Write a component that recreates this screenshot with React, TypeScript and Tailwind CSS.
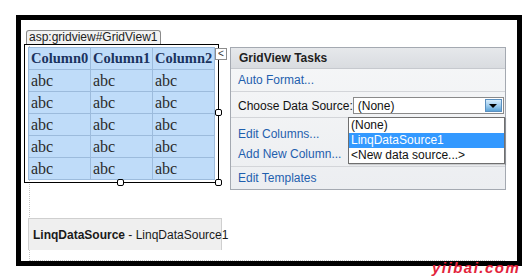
const ui = { fontFamily: '"Liberation Sans", Arial, sans-serif' };
const serif = { fontFamily: '"Liberation Serif", "Times New Roman", serif' };

const rows = [0, 1, 2, 3, 4];
const cols = ["Column0", "Column1", "Column2"];

const Handle = ({ className }: { className: string }) => (
  <div
    className={`absolute w-[7px] h-[7px] rounded-[2px] border border-black bg-white ${className}`}
  />
);

const GridView = () => (
  <div className="flex flex-col">
    <div
      className="ml-[2px] self-start h-[14px] px-[2px] border border-b-0 border-[#8a8a8a] rounded-t-[3px] bg-[#f2f2f2] text-[12px] leading-[13px] text-[#222] whitespace-nowrap"
      style={ui}
    >
      asp:gridview#GridView1
    </div>
    <div className="relative w-[195px] h-[139px] border border-black pl-[3px] pt-[2px]">
      <div
        className="grid grid-cols-[62px_62px_62px] border-l border-t border-[#9cbbdc] bg-[#bfdcf9] w-[187px]"
        style={serif}
      >
        {cols.map((c) => (
          <div
            key={c}
            className="h-[22px] pl-[2px] border-r border-b border-[#9cbbdc] text-[14.5px] leading-[21px] font-bold text-[#1b3360] whitespace-nowrap overflow-hidden"
          >
            {c}
          </div>
        ))}
        {rows.map((r) =>
          cols.map((c) => (
            <div
              key={`${r}-${c}`}
              className="h-[22px] pl-[2px] border-r border-b border-[#9cbbdc] text-[16px] leading-[21px] text-[#2a2a2a]"
            >
              abc
            </div>
          ))
        )}
      </div>
      <Handle className="right-[-4px] top-[64px]" />
      <Handle className="left-[92px] bottom-[-4px]" />
      <Handle className="right-[-4px] bottom-[-4px]" />
      <div
        className="absolute right-[-9px] top-[3px] w-[12px] h-[12px] border border-[#8c8c8c] bg-white flex items-center justify-center text-[10px] leading-none text-[#333]"
        style={ui}
      >
        &lt;
      </div>
    </div>
  </div>
);

const Link = ({ children }: { children: string }) => (
  <div className="text-[#1f5fae] whitespace-nowrap">{children}</div>
);

const TasksPanel = () => (
  <div
    className="relative ml-[11px] mt-[17px] w-[279px] h-[143px] border border-[#a4a9b1] bg-gradient-to-b from-[#f6f7f8] to-[#eceef1] text-[12px]"
    style={ui}
  >
    <div className="h-[21px] pl-[8px] flex items-center border-b border-[#c6c9ce] bg-gradient-to-b from-[#e6e8eb] to-[#d9dce0] font-bold text-[#1e1e1e]">
      GridView Tasks
    </div>
    <div className="h-[23px] pl-[7px] flex items-center border-b border-[#d3d5d9]">
      <Link>Auto Format...</Link>
    </div>
    <div className="h-[26px] pl-[7px] pt-[5px] flex items-start border-b border-[#d3d5d9]">
      <div className="leading-[18px] text-[#111] whitespace-nowrap">Choose Data Source:</div>
      <div className="ml-auto mr-[1px] w-[151px] h-[17px] border border-[#8a8a8a] bg-white flex items-center pl-[4px]">
        <span className="text-[#111] leading-none">(None)</span>
        <div className="ml-auto mr-[1px] w-[17px] h-[13px] border border-[#5a8fbf] bg-gradient-to-b from-[#d7ecfb] via-[#9fcdee] to-[#5aa2d6] flex items-center justify-center">
          <div className="w-0 h-0 border-l-[4px] border-r-[4px] border-t-[4px] border-l-transparent border-r-transparent border-t-black" />
        </div>
      </div>
    </div>
    <div className="h-[49px] pl-[7px] pt-[6px] leading-[20px] border-b border-[#d3d5d9]">
      <Link>Edit Columns...</Link>
      <Link>Add New Column...</Link>
    </div>
    <div className="h-[22px] pl-[7px] leading-[22px]">
      <Link>Edit Templates</Link>
    </div>

    <div className="absolute left-[117px] top-[69px] w-[157px] h-[47px] border border-[#6f6f6f] bg-white leading-[15px] text-[#111] shadow-[1px_1px_1px_rgba(0,0,0,0.15)]">
      <div className="pl-[2px] h-[15px]">(None)</div>
      <div className="pl-[2px] h-[15px] bg-[#3399ff] text-white">LinqDataSource1</div>
      <div className="pl-[2px] h-[15px]">&lt;New data source...&gt;</div>
    </div>
  </div>
);

export default function App() {
  return (
    <div className="relative w-[531px] h-[278px] bg-white overflow-hidden">
      <div className="ml-[16px] mt-[15px] w-[506px] h-[251px] border-[5px] border-black bg-white">
        <div className="ml-[8px] mt-[2px] w-[476px] h-[231px] border-l border-b border-dotted border-[#c4c4c4]">
          <div className="flex items-start mt-[10px] -ml-[6px]">
            <GridView />
            <TasksPanel />
          </div>
          <div
            className="-ml-[2px] mt-[28px] w-[194px] h-[32px] border border-b-0 border-[#cfcfcf] bg-[#efefef] flex items-center pl-[4px] text-[12px] text-[#1a1a1a]"
            style={ui}
          >
            <span className="font-bold">LinqDataSource</span>
            <span className="whitespace-pre"> - LinqDataSource1</span>
          </div>
        </div>
      </div>
      <div
        className="absolute left-[432px] top-[257px] text-[15px] font-bold italic text-[#e3243b] tracking-[1.5px]"
        style={ui}
      >
        yiibai.com
      </div>
    </div>
  );
}
